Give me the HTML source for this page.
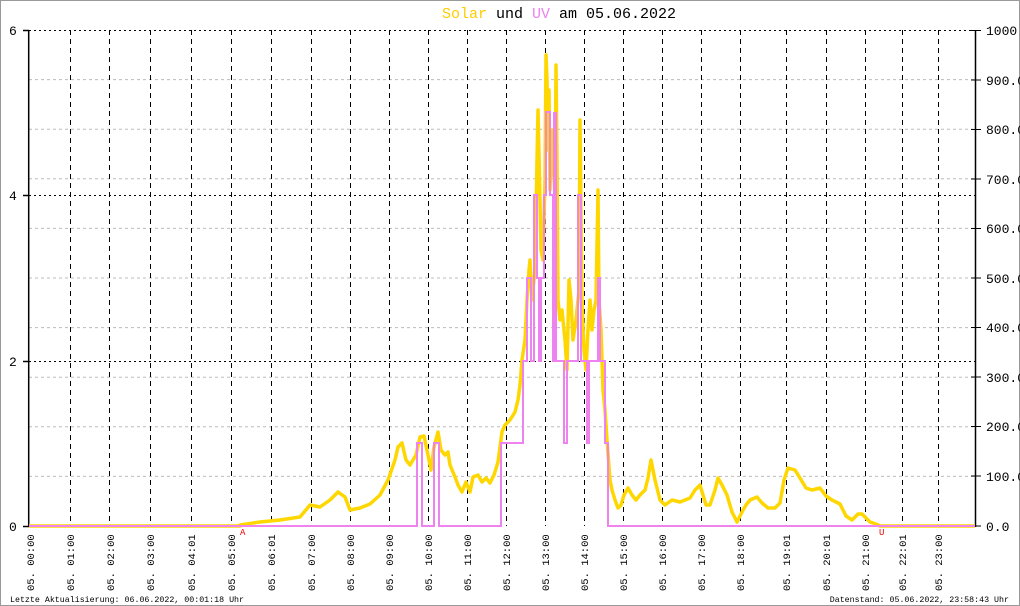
<!DOCTYPE html>
<html><head><meta charset="utf-8"><style>
html,body{margin:0;padding:0;background:#fff;}
svg{display:block;}
text{font-family:"Liberation Mono","DejaVu Sans Mono",monospace;}
</style></head><body>
<svg width="1020" height="606" viewBox="0 0 1020 606" xmlns="http://www.w3.org/2000/svg">
<rect x="0.5" y="0.5" width="1019" height="605" fill="#fff" stroke="#999"/>
<text x="559" y="18" font-size="15" text-anchor="middle"><tspan fill="#ffcc00">Solar</tspan> und <tspan fill="#ee82ee">UV</tspan> am 05.06.2022</text>
<g stroke="#bbb" stroke-width="1" stroke-dasharray="3,3">
<line x1="29" x2="975" y1="79.6" y2="79.6"/><line x1="29" x2="975" y1="129.2" y2="129.2"/>
<line x1="29" x2="975" y1="178.8" y2="178.8"/><line x1="29" x2="975" y1="228.4" y2="228.4"/>
<line x1="29" x2="975" y1="278" y2="278"/><line x1="29" x2="975" y1="327.6" y2="327.6"/>
<line x1="29" x2="975" y1="377.2" y2="377.2"/><line x1="29" x2="975" y1="426.8" y2="426.8"/>
<line x1="29" x2="975" y1="476.4" y2="476.4"/>
</g>
<g stroke="#000" stroke-width="1" stroke-dasharray="2,3">
<line x1="29" x2="975" y1="30.5" y2="30.5"/><line x1="29" x2="975" y1="195.5" y2="195.5"/><line x1="29" x2="975" y1="361.5" y2="361.5"/>
</g>
<g stroke="#000" stroke-width="1" stroke-dasharray="5,4">
<line x1="70.5" x2="70.5" y1="30" y2="526"/><line x1="109.5" x2="109.5" y1="30" y2="526"/>
<line x1="150.5" x2="150.5" y1="30" y2="526"/><line x1="191.5" x2="191.5" y1="30" y2="526"/>
<line x1="231.5" x2="231.5" y1="30" y2="526"/><line x1="271.5" x2="271.5" y1="30" y2="526"/>
<line x1="311.5" x2="311.5" y1="30" y2="526"/><line x1="350.5" x2="350.5" y1="30" y2="526"/>
<line x1="389.5" x2="389.5" y1="30" y2="526"/><line x1="428.5" x2="428.5" y1="30" y2="526"/>
<line x1="467.5" x2="467.5" y1="30" y2="526"/><line x1="506.5" x2="506.5" y1="30" y2="526"/>
<line x1="545.5" x2="545.5" y1="30" y2="526"/><line x1="584.5" x2="584.5" y1="30" y2="526"/>
<line x1="623.5" x2="623.5" y1="30" y2="526"/><line x1="662.5" x2="662.5" y1="30" y2="526"/>
<line x1="701.5" x2="701.5" y1="30" y2="526"/><line x1="740.5" x2="740.5" y1="30" y2="526"/>
<line x1="786.5" x2="786.5" y1="30" y2="526"/><line x1="826.5" x2="826.5" y1="30" y2="526"/>
<line x1="865.5" x2="865.5" y1="30" y2="526"/><line x1="902.5" x2="902.5" y1="30" y2="526"/>
<line x1="938.5" x2="938.5" y1="30" y2="526"/>
</g>
<g stroke="#000" stroke-width="1.5">
<line x1="28.7" x2="28.7" y1="30" y2="527"/><line x1="975.5" x2="975.5" y1="30" y2="527"/>
<line x1="23" x2="29" y1="30.5" y2="30.5"/><line x1="23" x2="29" y1="195.5" y2="195.5"/><line x1="23" x2="29" y1="361.5" y2="361.5"/><line x1="23" x2="29" y1="526.5" y2="526.5"/>
</g>
<g stroke="#000" stroke-width="1">
<line x1="971" x2="981" y1="30.5" y2="30.5"/><line x1="971" x2="981" y1="80" y2="80"/><line x1="971" x2="981" y1="129.5" y2="129.5"/><line x1="971" x2="981" y1="179" y2="179"/><line x1="971" x2="981" y1="228.5" y2="228.5"/><line x1="971" x2="981" y1="278" y2="278"/><line x1="971" x2="981" y1="327.5" y2="327.5"/><line x1="971" x2="981" y1="377" y2="377"/><line x1="971" x2="981" y1="426.5" y2="426.5"/><line x1="971" x2="981" y1="476" y2="476"/><line x1="971" x2="981" y1="526" y2="526"/>
</g>
<g font-size="13" fill="#000">
<text x="9" y="35">6</text><text x="9" y="200">4</text><text x="9" y="366">2</text><text x="9" y="531">0</text>
<text x="986" y="35">1000</text><text x="986" y="85">900.0</text><text x="986" y="134">800.0</text><text x="986" y="184">700.0</text><text x="986" y="233">600.0</text><text x="986" y="283">500.0</text><text x="986" y="332">400.0</text><text x="986" y="382">300.0</text><text x="986" y="431">200.0</text><text x="986" y="481">100.0</text><text x="986" y="531">0.0</text>
</g>
<polyline fill="none" stroke="#ffd700" stroke-width="3.5" stroke-linejoin="round" points="29,526 240,526 240,525 260,522 280,520 300,517 310,505 320,507 330,500 338,492 345,497 350,510 360,508 370,504 380,495 388,480 395,460 398,447 402,443 406,460 410,465 416,455 420,437 424,436 428,455 431,470 434,447 438,432 441,450 445,455 448,452 450,465 455,477 458,485 462,492 466,482 470,492 473,477 478,475 482,482 486,478 490,483 494,475 498,462 502,432 505,425 510,420 515,412 518,400 520,385 522,360 525,340 527,300 529,270 530,260 532,300 535,270 537,160 538,110 540,200 541,250 543,260 545,180 546,55 547,80 548,150 549,90 550,190 552,130 553,150 555,200 556,65 557,160 558,300 560,320 562,310 565,340 567,370 569,280 571,300 573,340 576,320 579,290 580,120 582,300 584,350 586,370 588,330 590,300 592,330 594,310 596,300 598,190 599,300 601,330 603,390 605,410 607,440 610,480 612,490 615,500 618,508 621,505 624,495 628,488 632,495 636,500 640,495 645,490 648,478 651,460 655,480 660,500 665,505 672,500 680,502 685,500 690,498 695,490 700,485 703,495 706,505 710,505 715,490 718,478 722,485 727,495 732,512 737,522 742,512 746,505 750,500 757,497 762,503 768,508 775,508 780,503 784,480 788,468 795,470 800,478 806,488 812,490 820,488 826,496 832,500 840,504 846,516 852,520 858,514 862,514 866,518 870,522 876,524 880,526 975,526"/>
<polyline fill="none" stroke="#ee82ee" stroke-width="2" points="29,526 417,526 417,443 422,443 422,526 434,526 434,443 439,443 439,526 501,526 501,443 523,443 523,361 527,361 527,278 531,278 531,361 534,361 534,195 537,195 537,278 539,278 539,361 541,361 541,278 544,278 544,195 546,195 546,112 550,112 550,195 553,195 553,361 554,361 554,113 556,113 556,361 564,361 564,443 567,443 567,361 578,361 578,195 581,195 581,361 587,361 587,443 589,443 589,361 598,361 598,278 600,278 600,361 605,361 605,443 608,443 608,526 975,526"/>
<text x="240" y="535" font-size="9" fill="#e00">A</text>
<text x="879" y="535" font-size="9" fill="#e00">U</text>
<g font-size="10.5" fill="#000">
<text transform="translate(34,591) rotate(-90)">05. 00:00</text>
<text transform="translate(74,591) rotate(-90)">05. 01:00</text>
<text transform="translate(114,591) rotate(-90)">05. 02:00</text>
<text transform="translate(154,591) rotate(-90)">05. 03:00</text>
<text transform="translate(195,591) rotate(-90)">05. 04:01</text>
<text transform="translate(235,591) rotate(-90)">05. 05:00</text>
<text transform="translate(275,591) rotate(-90)">05. 06:01</text>
<text transform="translate(315,591) rotate(-90)">05. 07:00</text>
<text transform="translate(354,591) rotate(-90)">05. 08:00</text>
<text transform="translate(393,591) rotate(-90)">05. 09:00</text>
<text transform="translate(432,591) rotate(-90)">05. 10:00</text>
<text transform="translate(471,591) rotate(-90)">05. 11:00</text>
<text transform="translate(510,591) rotate(-90)">05. 12:00</text>
<text transform="translate(549,591) rotate(-90)">05. 13:00</text>
<text transform="translate(588,591) rotate(-90)">05. 14:00</text>
<text transform="translate(627,591) rotate(-90)">05. 15:00</text>
<text transform="translate(666,591) rotate(-90)">05. 16:00</text>
<text transform="translate(705,591) rotate(-90)">05. 17:00</text>
<text transform="translate(744,591) rotate(-90)">05. 18:00</text>
<text transform="translate(790,591) rotate(-90)">05. 19:01</text>
<text transform="translate(830,591) rotate(-90)">05. 20:01</text>
<text transform="translate(869,591) rotate(-90)">05. 21:00</text>
<text transform="translate(906,591) rotate(-90)">05. 22:01</text>
<text transform="translate(942,591) rotate(-90)">05. 23:00</text>
</g>
<text x="10" y="602" font-size="8.3" fill="#000">Letzte Aktualisierung: 06.06.2022, 00:01:18 Uhr</text>
<text x="1009" y="602" font-size="8.3" fill="#000" text-anchor="end">Datenstand: 05.06.2022, 23:58:43 Uhr</text>
</svg>
</body></html>
